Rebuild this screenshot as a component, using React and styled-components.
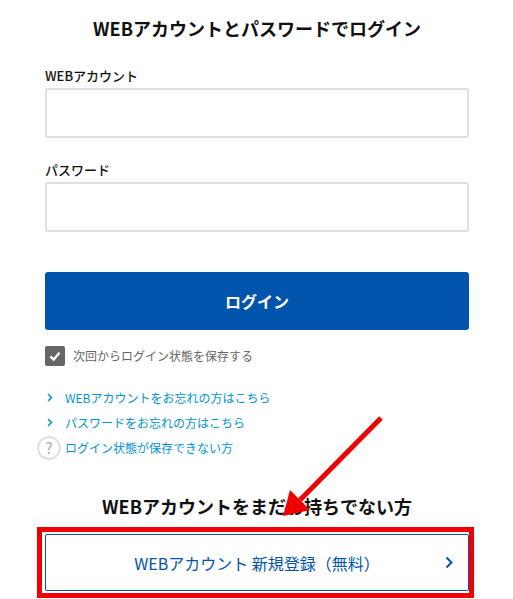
import React from 'react';
import styled, { createGlobalStyle } from 'styled-components';

const Global = createGlobalStyle`
  html, body { margin: 0; padding: 0; background: #fff; }
  body { font-family: "Noto Sans CJK JP", "Noto Sans", sans-serif; }
`;

const Page = styled.div`
  position: relative;
  width: 513px;
  height: 599px;
  overflow: hidden;
  box-sizing: border-box;
  padding: 14px 44px 0 45px;
`;

const Title = styled.h1`
  margin: 0 0 24px;
  font-size: 18px;
  line-height: 28px;
  font-weight: 700;
  text-align: center;
  color: #111;
  white-space: nowrap;
`;

const Label = styled.label`
  display: block;
  font-size: 13px;
  line-height: 20px;
  font-weight: 500;
  color: #111;
  margin-bottom: 2px;
`;

const Input = styled.input`
  display: block;
  box-sizing: border-box;
  width: 424px;
  height: 50px;
  border: 2px solid #dedee4;
  border-radius: 3px;
  background: #fff;
  margin-bottom: 22px;
`;

const Submit = styled.button`
  display: block;
  width: 424px;
  height: 58px;
  margin-top: 40px;
  border: 0;
  border-radius: 3px;
  background: #0054ac;
  color: #fff;
  font-family: inherit;
  font-size: 16px;
  font-weight: 700;
`;

const Remember = styled.div`
  display: flex;
  align-items: center;
  gap: 8px;
  margin-top: 16px;
  font-size: 12px;
  line-height: 20px;
  color: #666;
`;

const Check = styled.span`
  display: flex;
  align-items: center;
  justify-content: center;
  width: 20px;
  height: 20px;
  border-radius: 2px;
  background: #666;
`;

const Links = styled.ul`
  list-style: none;
  margin: 19px 0 0;
  padding: 0;
`;

const LinkRow = styled.li`
  position: relative;
  display: flex;
  align-items: center;
  height: 25px;
  padding-left: 20px;
  font-size: 12px;
  color: #0095d0;
`;

const Chevron = styled.svg`
  position: absolute;
  left: 2px;
  top: 8px;
`;

const Help = styled.span`
  position: absolute;
  left: -8px;
  top: 1px;
  box-sizing: border-box;
  width: 24px;
  height: 24px;
  border: 2px solid #e0e0e0;
  border-radius: 50%;
  background: #fff;
  color: #aaa;
  font-size: 15px;
  line-height: 20px;
  text-align: center;
`;

const SubTitle = styled.h2`
  margin: 32px 0 0;
  font-size: 18px;
  line-height: 28px;
  font-weight: 700;
  text-align: center;
  color: #111;
  white-space: nowrap;
`;

const Highlight = styled.div`
  box-sizing: border-box;
  width: 437px;
  height: 71px;
  margin: 7px 0 0 -8px;
  padding: 2px 0 0 3px;
  border: 5px solid #f00000;
`;

const Register = styled.button`
  position: relative;
  display: block;
  box-sizing: border-box;
  width: 424px;
  height: 57px;
  border: 1px solid #0054ac;
  border-radius: 2px;
  background: #fff;
  color: #0054ac;
  font-family: inherit;
  font-size: 16px;
  padding: 0;
`;

const RegisterChevron = styled.svg`
  position: absolute;
  right: 14px;
  top: 21px;
`;

const Arrow = styled.svg`
  position: absolute;
  left: 0;
  top: 0;
  pointer-events: none;
`;

export default function App() {
  return (
    <Page>
      <Global />
      <Title>WEBアカウントとパスワードでログイン</Title>
      <Label>WEBアカウント</Label>
      <Input type="text" />
      <Label>パスワード</Label>
      <Input type="password" />
      <Submit>ログイン</Submit>
      <Remember>
        <Check>
          <svg width="14" height="14" viewBox="0 0 14 14">
            <path d="M2.5 7.5 L5.7 10.5 L11.5 3.8" fill="none" stroke="#fff" strokeWidth="2.4" />
          </svg>
        </Check>
        次回からログイン状態を保存する
      </Remember>
      <Links>
        <LinkRow>
          <Chevron width="6" height="9" viewBox="0 0 6 9">
            <path d="M1 1 L4.5 4.5 L1 8" fill="none" stroke="#0095d0" strokeWidth="1.5" />
          </Chevron>
          WEBアカウントをお忘れの方はこちら
        </LinkRow>
        <LinkRow>
          <Chevron width="6" height="9" viewBox="0 0 6 9">
            <path d="M1 1 L4.5 4.5 L1 8" fill="none" stroke="#0095d0" strokeWidth="1.5" />
          </Chevron>
          パスワードをお忘れの方はこちら
        </LinkRow>
        <LinkRow>
          <Help>?</Help>
          ログイン状態が保存できない方
        </LinkRow>
      </Links>
      <SubTitle>WEBアカウントをまだお持ちでない方</SubTitle>
      <Highlight>
        <Register>
          WEBアカウント 新規登録（無料）
          <RegisterChevron width="9" height="13" viewBox="0 0 9 13">
            <path d="M1.5 1.5 L6.5 6.5 L1.5 11.5" fill="none" stroke="#0054ac" strokeWidth="2" />
          </RegisterChevron>
        </Register>
      </Highlight>
      <Arrow width="513" height="599" viewBox="0 0 513 599">
        <path d="M381 418 L300 500" stroke="#f00000" strokeWidth="5" fill="none" />
        <path d="M283 516 L290 490 L310 510 Z" fill="#f00000" />
      </Arrow>
    </Page>
  );
}
